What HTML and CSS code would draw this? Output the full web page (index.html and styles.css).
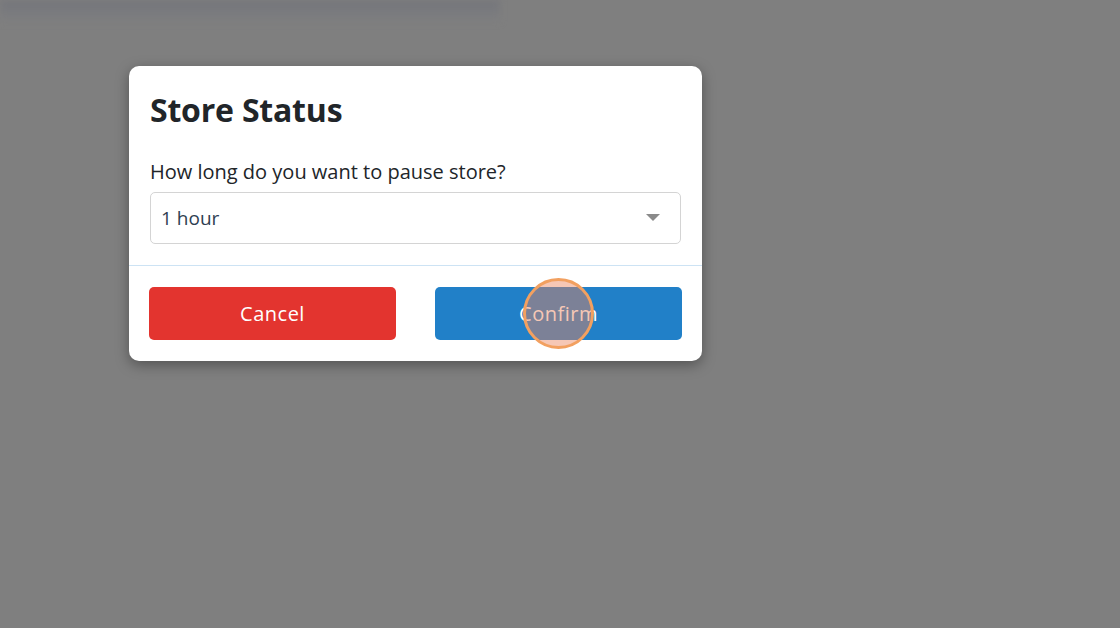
FILE: index.html
```html
<!DOCTYPE html>
<html lang="en">
  <head>
    <meta charset="UTF-8" />
    <meta name="viewport" content="width=device-width, initial-scale=1.0" />
    <title>Store Status</title>
    <link rel="stylesheet" href="styles.css">
  </head>
  <body>
    <div class="backdrop-strip"></div>

    <div class="page">
      <div class="modal">
        <div class="modal-body">
          <h2 class="modal-title">Store Status</h2>
          <label class="field-label" for="pause-select">How long do you want to pause store?</label>
          <div class="select" id="pause-select">
            <span class="select-value">1 hour</span>
            <svg class="select-caret" width="14" height="8" viewBox="0 0 14 8">
              <path d="M0 0 H14 L7 7 Z" fill="#8a8a8a" />
            </svg>
          </div>
        </div>

        <div class="modal-footer">
          <button class="btn btn-cancel">Cancel</button>
          <button class="btn btn-confirm">
            Confirm
            <span class="click-marker"></span>
          </button>
        </div>
      </div>
    </div>
  </body>
</html>
```

FILE: styles.css
```css
/* Reset */
* {
  margin: 0;
  padding: 0;
  box-sizing: border-box;
}

body {
  font-family: 'Open Sans', 'DejaVu Sans', sans-serif;
  height: 628px;
  overflow: hidden;
  background-color: #7f7f7f;
  color: #212529;
}

/* faint blurred bar behind the overlay */
.backdrop-strip {
  height: 22px;
  width: 500px;
  background: linear-gradient(to bottom, #75767b, #7b7c7f 70%, #7f7f7f);
  filter: blur(3px);
  margin-bottom: -22px;
}

.page {
  padding: 66px 0 0 129px;
}

/* Modal */
.modal {
  width: 573px;
  background-color: #fff;
  border-radius: 10px;
  box-shadow: 0 4px 14px rgba(0, 0, 0, 0.35);
}

.modal-body {
  padding: 24px 21px 21px;
  border-bottom: 1px solid #cde3f4;
}

.modal-title {
  font-size: 32px;
  font-weight: 700;
  line-height: 40px;
  margin-bottom: 30px;
  letter-spacing: -0.2px;
}

.field-label {
  display: block;
  font-size: 20px;
  line-height: 24px;
  margin-bottom: 8px;
}

.select {
  height: 52px;
  border: 1px solid #d4d4d4;
  border-radius: 5px;
  display: flex;
  align-items: center;
  justify-content: space-between;
  padding: 0 20px 0 10px;
}

.select-value {
  font-size: 19px;
  color: #2f3e51;
}

/* Footer */
.modal-footer {
  display: flex;
  justify-content: space-between;
  padding: 21px 20px 21px 20px;
}

.btn {
  position: relative;
  width: 247px;
  height: 53px;
  border: none;
  border-radius: 5px;
  font-family: inherit;
  font-size: 20px;
  letter-spacing: 0.5px;
  color: #fff;
  cursor: pointer;
}

.btn-cancel {
  background-color: #e3342f;
}

.btn-confirm {
  background-color: #2180c8;
}

/* orange click indicator */
.click-marker {
  position: absolute;
  left: 88px;
  top: -9px;
  width: 71px;
  height: 71px;
  border-radius: 50%;
  border: 3px solid #f2a060;
  background-color: rgba(235, 130, 90, 0.45);
}
```
